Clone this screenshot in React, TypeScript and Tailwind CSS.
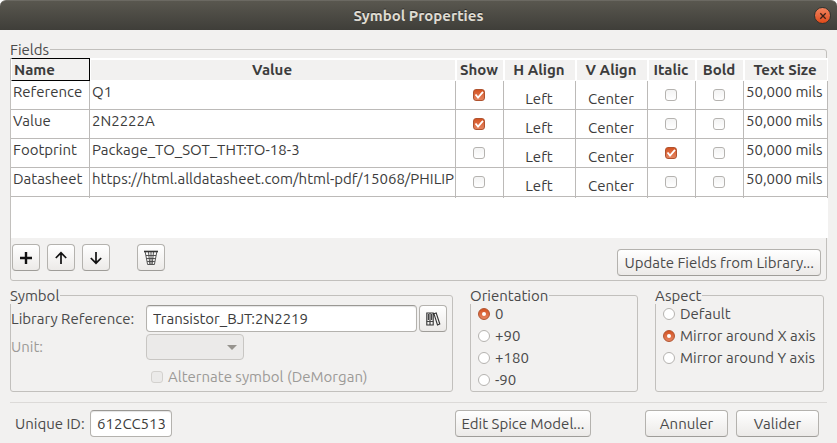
import React from "react";

type Field = {
  name: string;
  value: string;
  show: boolean;
  hAlign: string;
  vAlign: string;
  italic: boolean;
  bold: boolean;
  size: string;
};

const fields: Field[] = [
  { name: "Reference", value: "Q1", show: true, hAlign: "Left", vAlign: "Center", italic: false, bold: false, size: "50,000 mils" },
  { name: "Value", value: "2N2222A", show: true, hAlign: "Left", vAlign: "Center", italic: false, bold: false, size: "50,000 mils" },
  { name: "Footprint", value: "Package_TO_SOT_THT:TO-18-3", show: false, hAlign: "Left", vAlign: "Center", italic: true, bold: false, size: "50,000 mils" },
  { name: "Datasheet", value: "https://html.alldatasheet.com/html-pdf/15068/PHILIP", show: false, hAlign: "Left", vAlign: "Center", italic: false, bold: false, size: "50,000 mils" },
];

const headers = ["Value", "Show", "H Align", "V Align", "Italic", "Bold", "Text Size"];

const buttonLook =
  "flex h-[27px] items-center justify-center whitespace-nowrap rounded-[4px] border border-[#b4b2ae] border-b-[#9f9d99] bg-linear-to-b from-white to-[#eceae8]";

function Tick({ label, checked, disabled, id }: { label?: string; checked?: boolean; disabled?: boolean; id?: string }) {
  return (
    <span className="inline-grid size-3 shrink-0 align-middle">
      <input
        id={id}
        type="checkbox"
        aria-label={label}
        defaultChecked={checked}
        disabled={disabled}
        className="peer col-start-1 row-start-1 size-3 appearance-none rounded-[3px] border border-[#b5b3b0] bg-linear-to-b from-[#f3f3f3] to-white checked:border-[#b0532f] checked:from-[#d4521f] checked:to-[#e58560] disabled:border-[#d3d1ce] disabled:from-[#ebeae9] disabled:to-[#ebeae9]"
      />
      <svg viewBox="0 0 12 12" className="pointer-events-none invisible col-start-1 row-start-1 size-3 peer-checked:visible" fill="none" stroke="white" strokeWidth="1.8" aria-hidden="true">
        <path d="M2.5 5.5 L5 8.5 L10 2.8" />
      </svg>
    </span>
  );
}

function Radio({ group, label, checked }: { group: string; label: string; checked?: boolean }) {
  return (
    <label className="flex h-[22px] items-center gap-[5px] pl-[7px] whitespace-nowrap">
      <span className="inline-grid size-3 shrink-0">
        <input
          type="radio"
          name={group}
          defaultChecked={checked}
          className="peer col-start-1 row-start-1 size-3 appearance-none rounded-full border border-[#b5b3b0] bg-white checked:border-[#b0532f] checked:bg-linear-to-b checked:from-[#d4521f] checked:to-[#e58560]"
        />
        <span className="pointer-events-none invisible col-start-1 row-start-1 size-1 place-self-center rounded-full bg-white peer-checked:visible" />
      </span>
      {label}
    </label>
  );
}

function Group({ title, className, children }: { title: string; className?: string; children: React.ReactNode }) {
  return (
    <fieldset className={"min-w-0 rounded-[3px] border border-[#c2c0bd] " + (className ?? "")}>
      <legend className="-ml-px h-[17px] leading-[17px] pr-px">{title}</legend>
      {children}
    </fieldset>
  );
}

function IconButton({ label, className, children }: { label: string; className?: string; children: React.ReactNode }) {
  return (
    <button type="button" aria-label={label} className={buttonLook + " w-7 shrink-0 " + (className ?? "")}>
      <svg viewBox="0 0 16 16" className="size-4" fill="none" stroke="#111" aria-hidden="true">
        {children}
      </svg>
    </button>
  );
}

export default function App() {
  return (
    <div className="flex min-h-screen flex-col bg-white font-['Ubuntu','Noto_Sans',sans-serif] text-[15px] leading-[18px] text-[#4a4a4a]">
      <header className="grid h-[30px] grid-cols-[1fr_auto_1fr] items-center rounded-t-[6px] border-t border-[#6b6962] bg-linear-to-b from-[#59574f] to-[#3f3e39] px-[6px]">
        <h1 className="col-start-2 font-bold text-[#dfdbd2] [text-shadow:0_-1px_0_#2b2a27]">Symbol Properties</h1>
        <button type="button" aria-label="Close" className="flex size-[17px] items-center justify-center justify-self-end rounded-full border border-[#33322d] bg-linear-to-b from-[#f2825c] to-[#df4a16]">
          <svg viewBox="0 0 8 8" className="size-2" stroke="#3a2018" strokeWidth="1.3" aria-hidden="true">
            <path d="M1.3 1.3 L6.7 6.7 M6.7 1.3 L1.3 6.7" />
          </svg>
        </button>
      </header>

      <main className="flex flex-1 flex-col bg-[#f2f1f0] px-[10px] pt-[11px]">
        <Group title="Fields">
          <div className="-mr-[2px] bg-white pb-10">
            <table className="w-full table-fixed border-separate border-spacing-0 text-[#3c3c3c]">
              <colgroup>
                <col className="w-[79px]" />
                <col />
                <col className="w-12" />
                <col className="w-[72px]" />
                <col className="w-[72px]" />
                <col className="w-12" />
                <col className="w-12" />
                <col className="w-[84px]" />
              </colgroup>
              <thead>
                <tr className="h-[23px]">
                  <th className="border border-l-white border-y-black border-r-black bg-[#f2f1f0] p-0 pl-[2px] text-left">Name</th>
                  {headers.map((h) => (
                    <th key={h} className="border border-t-2 border-white bg-[#f2f1f0] p-0 pr-[2px] text-center whitespace-nowrap">
                      {h}
                    </th>
                  ))}
                </tr>
              </thead>
              <tbody>
                {fields.map((f) => (
                  <tr key={f.name} className="h-[29px] *:border-r *:border-b *:border-[#bcbab8]">
                    <td className="p-0 align-top">
                      <div className="pt-[2px] pl-[2px]">{f.name}</div>
                    </td>
                    <td className="p-0 align-top">
                      <div className="overflow-hidden pt-[2px] pl-[2px] whitespace-nowrap">{f.value}</div>
                    </td>
                    <td className="p-0 pr-px pb-[3px] text-center align-middle leading-none">
                      <Tick label={"Show " + f.name} checked={f.show} />
                    </td>
                    <td className="p-0 pr-px pb-px text-center align-bottom">{f.hAlign}</td>
                    <td className="p-0 pr-px pb-px text-center align-bottom">{f.vAlign}</td>
                    <td className="p-0 pr-px pb-[3px] text-center align-middle leading-none">
                      <Tick label={"Italic " + f.name} checked={f.italic} />
                    </td>
                    <td className="p-0 pr-px pb-[3px] text-center align-middle leading-none">
                      <Tick label={"Bold " + f.name} checked={f.bold} />
                    </td>
                    <td className="p-0 align-top">
                      <div className="pt-[2px] pl-[2px] whitespace-nowrap">{f.size}</div>
                    </td>
                  </tr>
                ))}
              </tbody>
              <tfoot aria-hidden="true">
                <tr className="h-px *:border-r *:border-[#bcbab8] *:p-0">
                  <td />
                  <td />
                  <td />
                  <td />
                  <td />
                  <td />
                  <td />
                  <td />
                </tr>
              </tfoot>
            </table>
          </div>
          <div className="flex items-start gap-[7px] pt-[6px] pr-[5px] pb-1 pl-px">
            <IconButton label="Add field">
              <path d="M8 2 V14 M2 8 H14" strokeWidth="2.4" />
            </IconButton>
            <IconButton label="Move up">
              <path d="M8 14 V3 M2.8 8 L8 2.8 L13.2 8" strokeWidth="1.7" />
            </IconButton>
            <IconButton label="Move down">
              <path d="M8 2 V13 M2.8 8 L8 13.2 L13.2 8" strokeWidth="1.7" />
            </IconButton>
            <IconButton label="Delete field" className="ml-5">
              <path d="M1 1.5 H15" stroke="#333" strokeWidth="1.6" />
              <path d="M2.2 2 L4.6 14.5 H11.4 L13.8 2 M5.5 2 L6.8 14 M10.5 2 L9.2 14 M8 2 V14 M3 5.5 H13 M3.6 8.5 H12.4 M4.2 11.5 H11.8" stroke="#444" strokeWidth="0.9" />
            </IconButton>
            <button type="button" className={buttonLook + " mt-[5px] ml-auto px-[6px]"}>
              Update Fields from Library...
            </button>
          </div>
        </Group>

        <div className="mt-[6px] flex gap-[17px] pr-[3px]">
          <Group title="Symbol" className="flex-1">
            <div className="grid grid-cols-[135px_1fr] items-center gap-y-[2px] pt-px pr-[5px]">
              <label htmlFor="library-reference" className="whitespace-nowrap">
                Library Reference:
              </label>
              <div className="flex gap-[2px]">
                <input
                  id="library-reference"
                  defaultValue="Transistor_BJT:2N2219"
                  className="h-[27px] min-w-0 flex-1 rounded-[4px] border border-[#b4b2ae] border-t-[#9a9894] bg-white px-[6px] text-[#3c3c3c] shadow-[inset_0_1px_1px_#e4e4e4]"
                />
                <IconButton label="Browse library">
                  <path d="M1.8 2 H5 V14 H1.8 Z M5 2 H8.2 V14 H5 Z M9 2.8 L11.2 2 L14.8 13 L12.5 14 Z" stroke="#333" strokeWidth="1.1" />
                  <path d="M3.4 3 V9 M6.6 3 V9 M1.8 10.5 H8.2" stroke="#444" strokeWidth="1.2" />
                </IconButton>
              </div>
              <label htmlFor="unit" className="text-[#9c9a97]">
                Unit:
              </label>
              <div className="grid w-[98px] items-center">
                <select id="unit" disabled className="col-start-1 row-start-1 h-[26px] w-full appearance-none rounded-[4px] border border-[#c8c6c3] bg-[#ebeae9]" />
                <svg viewBox="0 0 10 5" className="pointer-events-none col-start-1 row-start-1 mr-[7px] h-[5px] w-[10px] justify-self-end" fill="#96938e" aria-hidden="true">
                  <path d="M0 0 H10 L5 5 Z" />
                </svg>
              </div>
              <div className="col-start-2 mt-[6px] flex items-center gap-[5px] pl-[5px] text-[#9c9a97]">
                <Tick id="alternate" disabled />
                <label htmlFor="alternate">Alternate symbol (DeMorgan)</label>
              </div>
            </div>
          </Group>
          <Group title="Orientation" className="w-[168px]">
            <div className="-mt-px">
              <Radio group="orientation" label="0" checked />
              <Radio group="orientation" label="+90" />
              <Radio group="orientation" label="+180" />
              <Radio group="orientation" label="-90" />
            </div>
          </Group>
          <Group title="Aspect" className="w-[169px]">
            <div className="-mt-px">
              <Radio group="aspect" label="Default" />
              <Radio group="aspect" label="Mirror around X axis" checked />
              <Radio group="aspect" label="Mirror around Y axis" />
            </div>
          </Group>
        </div>

        <footer className="mt-[10px] flex items-center border-t border-[#dcdad8] pt-[7px] pr-2 pb-[6px] pl-[5px]">
          <label htmlFor="unique-id" className="w-[75px] whitespace-nowrap">
            Unique ID:
          </label>
          <input
            id="unique-id"
            defaultValue="612CC513"
            className="h-[27px] w-[82px] rounded-[4px] border border-[#b4b2ae] border-t-[#9a9894] bg-white px-[6px] text-[#3c3c3c] shadow-[inset_0_1px_1px_#e4e4e4]"
          />
          <button type="button" className={buttonLook + " ml-auto w-[136px]"}>
            Edit Spice Model...
          </button>
          <button type="button" className={buttonLook + " ml-[54px] w-[83px]"}>
            Annuler
          </button>
          <button type="button" className={buttonLook + " ml-2 w-[83px]"}>
            Valider
          </button>
        </footer>
      </main>
    </div>
  );
}
